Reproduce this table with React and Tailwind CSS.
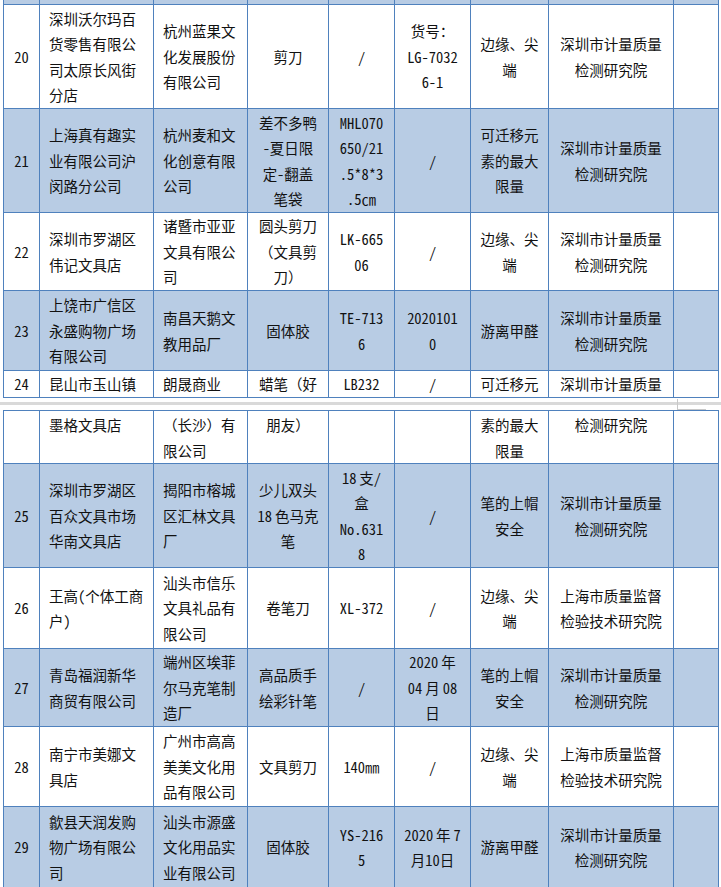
import React from "react";

// column widths (each includes its 1px right border)
const cols = [
  { w: "w-[36px]", align: "center" },
  { w: "w-[114px]", align: "left" },
  { w: "w-[94px]", align: "left" },
  { w: "w-[81px]", align: "center" },
  { w: "w-[66px]", align: "center" },
  { w: "w-[76px]", align: "center" },
  { w: "w-[78px]", align: "center" },
  { w: "w-[125px]", align: "center" },
  { w: "w-[45px]", align: "center" },
];

const topRows = [
  { h: "h-[5px]", blue: true, cells: [] },
  {
    h: "h-[104px]",
    cells: [
      ["20"],
      ["深圳沃尔玛百", "货零售有限公", "司太原长风街", "分店"],
      ["杭州蓝果文", "化发展股份", "有限公司"],
      ["剪刀"],
      ["/"],
      ["货号：", "LG-7032", "6-1"],
      ["边缘、尖", "端"],
      ["深圳市计量质量", "检测研究院"],
      [],
    ],
  },
  {
    h: "h-[104px]",
    blue: true,
    cells: [
      ["21"],
      ["上海真有趣实", "业有限公司沪", "闵路分公司"],
      ["杭州麦和文", "化创意有限", "公司"],
      ["差不多鸭", "-夏日限", "定-翻盖", "笔袋"],
      ["MHL070", "650/21", ".5*8*3", ".5㎝"],
      ["/"],
      ["可迁移元", "素的最大", "限量"],
      ["深圳市计量质量", "检测研究院"],
      [],
    ],
  },
  {
    h: "h-[78px]",
    cells: [
      ["22"],
      ["深圳市罗湖区", "伟记文具店"],
      ["诸暨市亚亚", "文具有限公", "司"],
      ["圆头剪刀", "（文具剪", "刀）"],
      ["LK-665", "06"],
      ["/"],
      ["边缘、尖", "端"],
      ["深圳市计量质量", "检测研究院"],
      [],
    ],
  },
  {
    h: "h-[80px]",
    blue: true,
    cells: [
      ["23"],
      ["上饶市广信区", "永盛购物广场", "有限公司"],
      ["南昌天鹅文", "教用品厂"],
      ["固体胶"],
      ["TE-713", "6"],
      ["2020101", "0"],
      ["游离甲醛"],
      ["深圳市计量质量", "检测研究院"],
      [],
    ],
  },
  {
    h: "h-[27px]",
    cells: [
      ["24"],
      ["昆山市玉山镇"],
      ["朗晟商业"],
      ["蜡笔（好"],
      ["LB232"],
      ["/"],
      ["可迁移元"],
      ["深圳市计量质量"],
      [],
    ],
  },
];

const bottomRows = [
  {
    h: "h-[53px]",
    top: true,
    cells: [
      [],
      ["墨格文具店"],
      ["（长沙）有", "限公司"],
      ["朋友）"],
      [],
      [],
      ["素的最大", "限量"],
      ["检测研究院"],
      [],
    ],
  },
  {
    h: "h-[104px]",
    blue: true,
    cells: [
      ["25"],
      ["深圳市罗湖区", "百众文具市场", "华南文具店"],
      ["揭阳市榕城", "区汇林文具", "厂"],
      ["少儿双头", "18\u2009色马克", "笔"],
      ["18\u2009支/", "盒", "No.631", "8"],
      ["/"],
      ["笔的上帽", "安全"],
      ["深圳市计量质量", "检测研究院"],
      [],
    ],
  },
  {
    h: "h-[81px]",
    cells: [
      ["26"],
      ["王高(个体工商", "户)"],
      ["汕头市信乐", "文具礼品有", "限公司"],
      ["卷笔刀"],
      ["XL-372"],
      ["/"],
      ["边缘、尖", "端"],
      ["上海市质量监督", "检验技术研究院"],
      [],
    ],
  },
  {
    h: "h-[78px]",
    blue: true,
    cells: [
      ["27"],
      ["青岛福润新华", "商贸有限公司"],
      ["端州区埃菲", "尔马克笔制", "造厂"],
      ["高品质手", "绘彩针笔"],
      ["/"],
      ["2020\u2009年", "04\u2009月\u200908", "日"],
      ["笔的上帽", "安全"],
      ["深圳市计量质量", "检测研究院"],
      [],
    ],
  },
  {
    h: "h-[80px]",
    cells: [
      ["28"],
      ["南宁市美娜文", "具店"],
      ["广州市高高", "美美文化用", "品有限公司"],
      ["文具剪刀"],
      ["140㎜"],
      ["/"],
      ["边缘、尖", "端"],
      ["上海市质量监督", "检验技术研究院"],
      [],
    ],
  },
  {
    h: "h-[81px]",
    blue: true,
    cells: [
      ["29"],
      ["歙县天润发购", "物广场有限公", "司"],
      ["汕头市源盛", "文化用品实", "业有限公司"],
      ["固体胶"],
      ["YS-216", "5"],
      ["2020\u2009年\u20097", "月10日"],
      ["游离甲醛"],
      ["深圳市计量质量", "检测研究院"],
      [],
    ],
  },
];

// full-width brackets keep their normal width
const hasWideParen = (s) => /[（）]/.test(s);

function Cell({ col, lines, top }) {
  return (
    <div
      className={`${col.w} shrink-0 h-full border-r border-b border-[#4f81bd] flex flex-col ${
        top ? "justify-start pt-[1px]" : "justify-center"
      } ${col.align === "left" ? "items-start pl-[9px]" : "items-center"}`}
    >
      {lines.map((l, i) => (
        <div
          key={i}
          className={`leading-[25.5px] whitespace-nowrap ${
            hasWideParen(l) ? "[font-feature-settings:normal]" : "[font-feature-settings:'hwid']"
          }`}
        >
          {l}
        </div>
      ))}
    </div>
  );
}

function Row({ row }) {
  return (
    <div className={`flex ${row.h} ${row.blue ? "bg-[#b8cce4]" : "bg-white"}`}>
      {cols.map((c, i) => (
        <Cell key={i} col={c} lines={row.cells[i] || []} top={row.top} />
      ))}
    </div>
  );
}

export default function App() {
  return (
    <div className="w-[721px] h-[887px] overflow-hidden bg-white text-[#111] text-[14.5px] font-['Noto_Sans_CJK_SC','Noto_Sans',sans-serif]">
      <div className="ml-[3px] w-[716px] border-l border-[#4f81bd]">
        {topRows.map((r, i) => (
          <Row key={i} row={r} />
        ))}
      </div>

      {/* page break */}
      <div className="relative h-[12px] pt-[4px]">
        <div className="h-[3px] bg-[#d9d9d9]" />
        <div className="absolute left-[677px] top-[1px] w-[29px] h-[11px] border-l border-b border-[#c8c8c8]" />
      </div>

      <div className="ml-[3px] w-[716px] border-l border-t border-[#4f81bd]">
        {bottomRows.map((r, i) => (
          <Row key={i} row={r} />
        ))}
      </div>
    </div>
  );
}
